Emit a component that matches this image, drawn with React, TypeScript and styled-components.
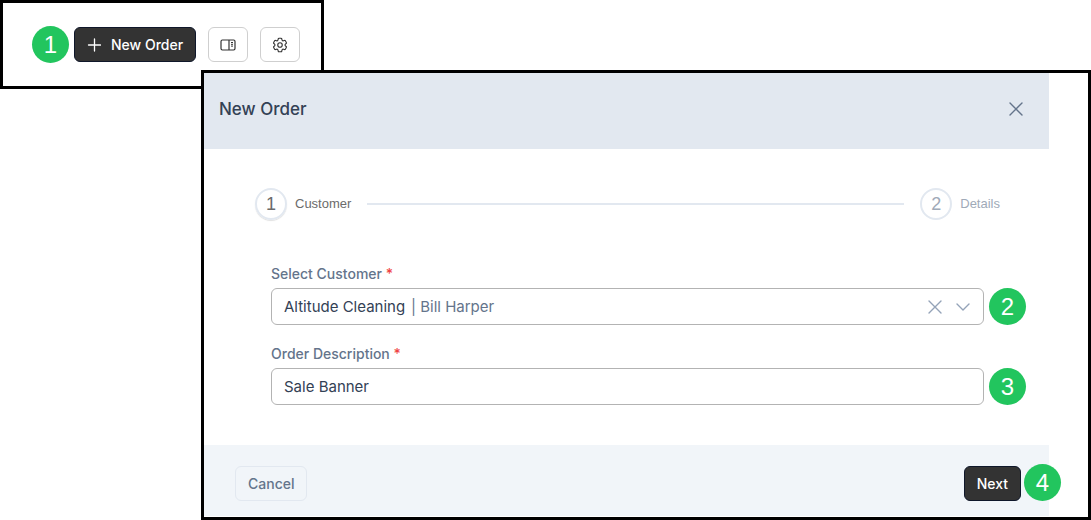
import { useRef, useState } from "react";
import styled, { createGlobalStyle } from "styled-components";
import { HiOutlineCog6Tooth } from "react-icons/hi2";

const GlobalStyle = createGlobalStyle`
  *, *::before, *::after { box-sizing: border-box; }
  body {
    margin: 0;
    background: #fff;
    color: #334155;
    font-family: Inter, "Liberation Sans", sans-serif;
    font-size: 14px;
    line-height: 20px;
  }
  button, input, select { font: inherit; margin: 0; }
`;

const Toolbar = styled.div`
  display: flex;
  align-items: center;
  gap: 12px;
  width: fit-content;
  height: 89px;
  padding: 0 21px 0 29px;
  border: 3px solid #000;
`;

const Marked = styled.div`
  display: flex;
  align-items: center;
  gap: 5px;
`;

const Badge = styled.span`
  display: flex;
  flex: none;
  align-items: center;
  justify-content: center;
  width: 37px;
  height: 37px;
  border-radius: 50%;
  background: #22c55e;
  color: #fff;
  font-family: "Liberation Sans", sans-serif;
  font-size: 24px;
  line-height: 24px;
`;

const Button = styled.button<{ $tone: "dark" | "outline" | "quiet" }>`
  display: inline-flex;
  align-items: center;
  justify-content: center;
  gap: 10px;
  height: 35px;
  padding: 0 12px;
  border: 1px solid
    ${(p) => ({ dark: "#0f172a", outline: "#cfcfcf", quiet: "#e2e8f0" })[p.$tone]};
  border-radius: 6px;
  background: ${(p) => ({ dark: "#333", outline: "#fff", quiet: "transparent" })[p.$tone]};
  color: ${(p) => ({ dark: "#fff", outline: "#333", quiet: "#64748b" })[p.$tone]};
  font-weight: 500;
  cursor: pointer;
`;

const IconButton = styled(Button)`
  width: 40px;
  padding: 0;
`;

const Frame = styled.section`
  position: relative;
  margin: -19px 0 0 201px;
  padding: 0 39px 1px 0;
  border: 3px solid #000;
  background: #fff;
`;

const Header = styled.header`
  display: flex;
  justify-content: space-between;
  align-items: center;
  height: 76px;
  padding: 0 26px 4px 15px;
  background: #e2e8f0;
`;

const Title = styled.h2`
  margin: 0;
  font-size: 17px;
  font-weight: 500;
  line-height: 24px;
`;

const BareButton = styled.button<{ $color: string }>`
  display: flex;
  flex: none;
  padding: 0;
  border: 0;
  background: none;
  color: ${(p) => p.$color};
  cursor: pointer;
`;

const Stepper = styled.ol`
  display: flex;
  align-items: center;
  gap: 16px;
  margin: 0;
  padding: 39px 49px 44px 51px;
  list-style: none;
`;

const Step = styled.li<{ $active?: boolean }>`
  display: flex;
  align-items: center;
  gap: 8px;
  color: ${(p) => (p.$active ? "#6b6b6b" : "#a0aab8")};
  font-family: "Liberation Sans", sans-serif;
  font-size: 13px;
`;

const StepNumber = styled.span`
  display: flex;
  align-items: center;
  justify-content: center;
  width: 32px;
  height: 32px;
  border: 2px solid #e2e8f0;
  border-radius: 50%;
  font-size: 18px;
  ${Step}:first-child & { box-shadow: 0 1px 1px rgba(0, 0, 0, 0.12); }
`;

const StepLine = styled.li`
  flex: 1;
  height: 2px;
  background: #e2e8f0;
`;

const Form = styled.form`
  display: flex;
  flex-direction: column;
  gap: 19px;
  padding: 0 23px 40px 67px;
`;

const Field = styled.div`
  display: flex;
  flex-direction: column;
  gap: 4px;
`;

const Label = styled.label`
  color: #64748b;
  font-weight: 500;
`;

const Required = styled.span`
  color: #ef4444;
`;

const Control = styled.div`
  display: flex;
  flex: 1;
  align-items: center;
  height: 37px;
  padding: 0 13px 0 12px;
  border: 1px solid #b3b3b3;
  border-radius: 6px;
  background: #fff;
  font-size: 15px;
`;

const CustomerSelect = styled.select`
  appearance: none;
  padding: 0;
  border: 0;
  outline: 0;
  background: none;
  color: #334155;
`;

const Contact = styled.span`
  flex: 1;
  padding-left: 5px;
  color: #64748b;
`;

const ControlIcons = styled.div`
  display: flex;
  align-items: center;
  gap: 14px;
`;

const TextInput = styled.input`
  flex: 1;
  min-width: 0;
  padding: 0;
  border: 0;
  outline: 0;
  background: none;
  color: #334155;
`;

const Footer = styled.footer`
  display: flex;
  justify-content: space-between;
  align-items: center;
  height: 71px;
  padding: 6px 28px 0 31px;
  background: #f1f5f9;
`;

const NextWrap = styled.div`
  position: relative;
  display: flex;
`;

const NextBadge = styled(Badge)`
  position: absolute;
  top: -2px;
  left: calc(100% + 3px);
`;

const PlusIcon = () => (
  <svg width="14" height="14" viewBox="0 0 14 14" fill="none" stroke="currentColor" strokeWidth="1.3" strokeLinecap="round" aria-hidden>
    <path d="M7.5 1v12M1.5 7h12" />
  </svg>
);

const CrossIcon = () => (
  <svg width="14" height="14" viewBox="0 0 14 14" fill="none" stroke="currentColor" strokeWidth="1.4" strokeLinecap="round" aria-hidden>
    <path d="M1 1l12 12M13 1L1 13" />
  </svg>
);

const ChevronIcon = () => (
  <svg width="14" height="14" viewBox="0 0 14 14" fill="none" stroke="currentColor" strokeWidth="1.4" strokeLinecap="round" strokeLinejoin="round" aria-hidden>
    <path d="M1 4l6 6 6-6" />
  </svg>
);

const PanelIcon = () => (
  <svg width="16" height="16" viewBox="0 0 16 16" fill="none" stroke="currentColor" aria-hidden>
    <rect x="1" y="3" width="14" height="10" rx="1.4" strokeWidth="1.2" />
    <path d="M9 3v10" strokeWidth="1.2" />
    <path d="M11 5.5h2M11 7.3h2M11 9.1h2" strokeWidth="1" />
  </svg>
);

export default function App() {
  const [customer, setCustomer] = useState("altitude");
  const [description, setDescription] = useState("Sale Banner");
  const selectRef = useRef<HTMLSelectElement>(null);

  return (
    <>
      <GlobalStyle />
      <Toolbar>
        <Marked>
          <Badge>1</Badge>
          <Button type="button" $tone="dark">
            <PlusIcon />
            New Order
          </Button>
        </Marked>
        <IconButton type="button" $tone="outline" aria-label="Layout">
          <PanelIcon />
        </IconButton>
        <IconButton type="button" $tone="outline" aria-label="Settings">
          <HiOutlineCog6Tooth size={18} strokeWidth={1.5} />
        </IconButton>
      </Toolbar>

      <Frame role="dialog" aria-labelledby="dialog-title">
        <Header>
          <Title id="dialog-title">New Order</Title>
          <BareButton type="button" $color="#64748b" aria-label="Close">
            <CrossIcon />
          </BareButton>
        </Header>

        <Stepper>
          <Step $active aria-current="step">
            <StepNumber>1</StepNumber>
            Customer
          </Step>
          <StepLine role="presentation" />
          <Step>
            <StepNumber>2</StepNumber>
            Details
          </Step>
        </Stepper>

        <Form id="order-form" onSubmit={(e) => e.preventDefault()}>
          <Field>
            <Label htmlFor="customer">
              Select Customer <Required>*</Required>
            </Label>
            <Marked>
              <Control>
                <CustomerSelect
                  id="customer"
                  ref={selectRef}
                  value={customer}
                  onChange={(e) => setCustomer(e.target.value)}
                >
                  <option value="" hidden />
                  <option value="altitude">Altitude Cleaning</option>
                </CustomerSelect>
                <Contact>{customer && "| Bill Harper"}</Contact>
                <ControlIcons>
                  <BareButton type="button" $color="#94a3b8" aria-label="Clear customer" onClick={() => setCustomer("")}>
                    <CrossIcon />
                  </BareButton>
                  <BareButton type="button" $color="#94a3b8" aria-label="Show customers" onClick={() => selectRef.current?.showPicker()}>
                    <ChevronIcon />
                  </BareButton>
                </ControlIcons>
              </Control>
              <Badge>2</Badge>
            </Marked>
          </Field>
          <Field>
            <Label htmlFor="description">
              Order Description <Required>*</Required>
            </Label>
            <Marked>
              <Control>
                <TextInput id="description" type="text" value={description} onChange={(e) => setDescription(e.target.value)} />
              </Control>
              <Badge>3</Badge>
            </Marked>
          </Field>
        </Form>

        <Footer>
          <Button type="button" $tone="quiet">
            Cancel
          </Button>
          <NextWrap>
            <Button type="submit" form="order-form" $tone="dark">
              Next
            </Button>
            <NextBadge>4</NextBadge>
          </NextWrap>
        </Footer>
      </Frame>
    </>
  );
}
